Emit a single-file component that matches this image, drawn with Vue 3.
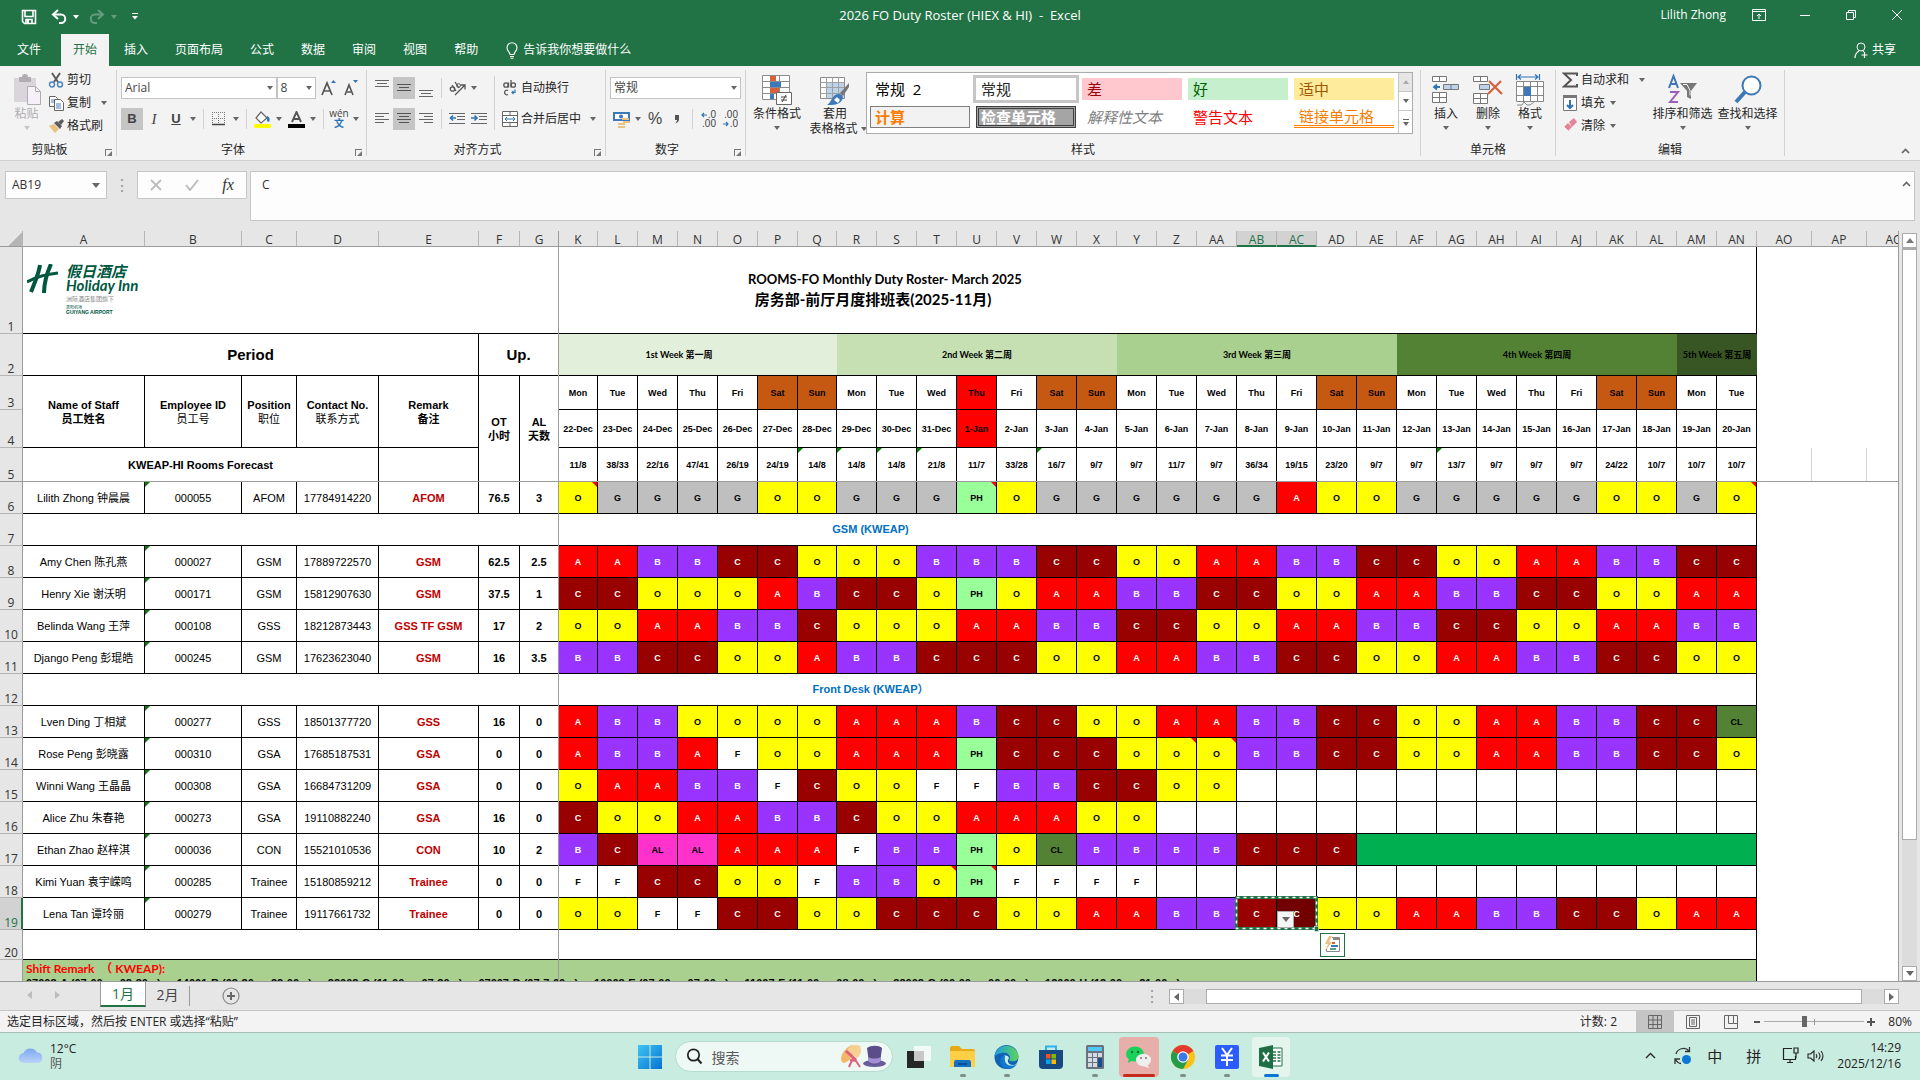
<script setup>
import { ref } from 'vue'

const tabs = ['开始', '插入', '页面布局', '公式', '数据', '审阅', '视图', '帮助']
const fontName = ref('Arial')
const fontSize = ref('8')
const numberFormat = ref('常规')
const cellName = ref('AB19')
const formula = ref('C')
const zoom = ref(80)
const query = ref('')

const staffCols = [
  ['A', 122], ['B', 97], ['C', 55], ['D', 82], ['E', 100], ['F', 41], ['G', 39],
]
const dayNames = ['K', 'L', 'M', 'N', 'O', 'P', 'Q', 'R', 'S', 'T', 'U', 'V', 'W', 'X', 'Y', 'Z',
  'AA', 'AB', 'AC', 'AD', 'AE', 'AF', 'AG', 'AH', 'AI', 'AJ', 'AK', 'AL', 'AM', 'AN']
const dayCols = dayNames.map(n => [n, n === 'K' || n === 'Q' ? 39 : 40])
const restCols = [['AO', 55], ['AP', 55], ['AQ', 55]]
const columns = [...staffCols, ...dayCols, ...restCols]

const weeks = [
  ['1st Week 第一周', 7, 'w1'], ['2nd Week 第二周', 7, 'w2'], ['3rd Week 第三周', 7, 'w3'],
  ['4th Week 第四周', 7, 'w4'], ['5th Week 第五周', 2, 'w5'],
]
const weekdays = ['Mon', 'Tue', 'Wed', 'Thu', 'Fri', 'Sat', 'Sun']
const days = dayNames.map((n, i) => ({
  col: n,
  name: weekdays[i % 7],
  date: i < 10 ? `${22 + i}-Dec` : `${i - 9}-Jan`,
  cls: i === 10 ? 'holiday' : i % 7 > 4 ? 'weekend' : '',
}))
const forecast = ('11/8 38/33 22/16 47/41 26/19 24/19 14/8 14/8 14/8 21/8 11/7 33/28 16/7 9/7 9/7 11/7 9/7 ' +
  '36/34 19/15 23/20 9/7 9/7 13/7 9/7 9/7 9/7 24/22 10/7 10/7 10/7').split(' ')
const flagged = ['Q', 'R', 'S', 'T', 'W', 'AG']

const rows = [
  { n: 6, name: 'Lilith Zhong 钟晨晨', id: '000055', pos: 'AFOM', tel: '17784914220', rem: 'AFOM', ot: '76.5', al: '3', notes: ['K', 'U', 'AN'],
    s: 'O G G G G O O G G G PH O G G G G G G A O O G G G G G O O G O' },
  { n: 7, title: 'GSM (KWEAP)' },
  { n: 8, name: 'Amy Chen 陈孔燕', id: '000027', pos: 'GSM', tel: '17889722570', rem: 'GSM', ot: '62.5', al: '2.5',
    s: 'A A B B C C O O O B B B C C O O A A B B C C O O A A B B C C' },
  { n: 9, name: 'Henry Xie 谢沃明', id: '000171', pos: 'GSM', tel: '15812907630', rem: 'GSM', ot: '37.5', al: '1',
    s: 'C C O O O A B C C O PH O A A B B C C O O A A B B C C O O A A' },
  { n: 10, name: 'Belinda Wang 王萍', id: '000108', pos: 'GSS', tel: '18212873443', rem: 'GSS TF GSM', ot: '17', al: '2',
    s: 'O O A A B B C O O O A A B B C C O O A A B B C C O O A A B B' },
  { n: 11, name: 'Django Peng 彭琨皓', id: '000245', pos: 'GSM', tel: '17623623040', rem: 'GSM', ot: '16', al: '3.5',
    s: 'B B C C O O A B B C C C O O A A B B C C O O A A B B C C O O' },
  { n: 12, title: 'Front Desk (KWEAP）' },
  { n: 13, name: 'Lven Ding 丁相斌', id: '000277', pos: 'GSS', tel: '18501377720', rem: 'GSS', ot: '16', al: '0',
    s: 'A B B O O O O A A A B C C O O A A B B C C O O A A B B C C CL' },
  { n: 14, name: 'Rose Peng 彭晓露', id: '000310', pos: 'GSA', tel: '17685187531', rem: 'GSA', ot: '0', al: '0', notes: ['Z', 'AA'],
    s: 'A B B A F O O A A A PH C C C O O O B B C C O O A A B B C C O' },
  { n: 15, name: 'Winni Wang 王晶晶', id: '000308', pos: 'GSA', tel: '16684731209', rem: 'GSA', ot: '0', al: '0',
    s: 'O A A B B F C O O F F B B C C O O - - - - - - - - - - - - -' },
  { n: 16, name: 'Alice Zhu 朱春艳', id: '000273', pos: 'GSA', tel: '19110882240', rem: 'GSA', ot: '16', al: '0',
    s: 'C O O A A B B C O O A A A O O - - - - - - - - - - - - - - -' },
  { n: 17, name: 'Ethan Zhao 赵梓淇', id: '000036', pos: 'CON', tel: '15521010536', rem: 'CON', ot: '10', al: '2', span: 10,
    s: 'B C AL AL A A A F B B PH O CL B B B B C C C' },
  { n: 18, name: 'Kimi Yuan 袁宇嵘鸣', id: '000285', pos: 'Trainee', tel: '15180859212', rem: 'Trainee', ot: '0', al: '0', notes: ['T', 'U'],
    s: 'F F C C O O F B B O PH F F F F - - - - - - - - - - - - - - -' },
  { n: 19, name: 'Lena Tan 谭玲丽', id: '000279', pos: 'Trainee', tel: '19117661732', rem: 'Trainee', ot: '0', al: '0',
    s: 'O O F F C C O O C C C O O A A B B C C O O A A B B C C O A A' },
].map(r => ({ notes: [], ...r, shifts: r.s ? r.s.split(' ') : [] }))

const shiftNotes = [
  '07003-A (07:00 — 03:30 \u00a0 )', '14001-B (03:30 — 22:00 \u00a0 )', '22003-C (11:00 — 07:30 \u00a0 )',
  '07007-D (07:7:00 \u00a0 )', '10003-E (07:00 — 07:00 \u00a0 )', '11007-F (11:00 — 08:00 \u00a0 )',
  '22003-G (00:00 — 06:00 \u00a0 )', '12000-H (12:00 — 21:00 \u00a0 )',
]
</script>

<template>
  <div class="excel">
    <header class="titlebar">
      <div class="qat">
        <button aria-label="保存"><svg width="16" height="16" viewBox="0 0 16 16"><path d="M1.500 1.500h13v13h-11l-2-2zM4 1.500v6h8v-6M5 14.500v-4h6v4" fill="none" stroke="#fff" stroke-width="1.600" /><path d="M6 11h2v3H6z" fill="#fff" /></svg></button>
        <button class="undo" aria-label="撤消"><svg width="16" height="16" viewBox="0 0 16 16"><path d="M2 5.500h8a4.200 4.200 0 0 1 0 8.500H8" fill="none" stroke="#fff" stroke-width="2" /><path d="M7 1 2 5.500 7 10" fill="none" stroke="#fff" stroke-width="2" /></svg><i class="ar white"></i></button>
        <button class="undo dim" aria-label="恢复"><svg width="16" height="16" viewBox="0 0 16 16"><path d="M14 5.500H6A4.200 4.200 0 0 0 6 14h2M9 1l5 4.500L9 10" fill="none" stroke="#fff" stroke-width="2" /></svg><i class="ar white"></i></button>
        <button aria-label="自定义"><svg width="8" height="8" viewBox="0 0 8 8"><path d="M1 0h6v1H1zM1 3h6L4 6.500z" fill="#fff" /></svg></button>
      </div>
      <h1>2026 FO Duty Roster (HIEX &amp; HI)&nbsp; -&nbsp; Excel</h1>
      <div class="winctl">
        <span>Lilith Zhong</span>
        <button aria-label="功能区显示选项"><svg width="14" height="12" viewBox="0 0 14 12"><path d="M.5.5h13v11H.5zM.5 2.500h13M7 10V5M5 7l2-2 2 2" fill="none" stroke="#fff" /></svg></button>
        <button aria-label="最小化"><svg width="12" height="12" viewBox="0 0 12 12"><path d="M1 6.500h10" stroke="#fff" /></svg></button>
        <button aria-label="还原"><svg width="12" height="12" viewBox="0 0 12 12"><path d="M1.500 3.500h7v7h-7zM3.500 3V1.500h7v7H9" fill="none" stroke="#fff" /></svg></button>
        <button aria-label="关闭"><svg width="12" height="12" viewBox="0 0 12 12"><path d="m1 1 10 10M11 1 1 11" stroke="#fff" /></svg></button>
      </div>
    </header>

    <nav class="tabs">
      <button class="file">文件</button>
      <button v-for="t in tabs" :key="t" class="tab" :class="{ on: t === '开始' }">{{ t }}</button>
      <button class="tell"><svg width="12" height="17" viewBox="0 0 12 17"><path d="M4 12.500C4 10 1 9 1 5.700a5 5 0 0 1 10 0C11 9 8 10 8 12.500zM4 14.500h4M4.500 16.300h3" fill="none" stroke="#fff" stroke-width="1.100" /></svg>告诉我你想要做什么</button>
      <button class="share"><svg width="14" height="17" viewBox="0 0 14 17"><circle cx="7" cy="5" r="4" fill="none" stroke="#fff" /><path d="M1 16c0-3 1.500-5.500 4-7M9 9l1 .8M10.500 10v6M7.500 13h6" fill="none" stroke="#fff" stroke-width="1.200" /></svg>共享</button>
    </nav>

    <section class="ribbon">
      <div class="group clip">
        <div class="body">
          <button class="big off">
            <svg width="30" height="32" viewBox="0 0 30 32"><path d="M2 4h22v24H2z" fill="#dad5da" /><path d="M7 3h3a3 3 0 0 1 6 0h3v5H7z" fill="#b1acb1" /><path d="M15.500 12.500h8l5 5v13h-13z" fill="#f6f0f8" stroke="#b1acb1" /><path d="M23.500 12.500v5h5" fill="none" stroke="#b1acb1" /></svg>
            <span>粘贴</span><i class="ar"></i>
          </button>
          <div class="stack">
            <button><svg width="16" height="16" viewBox="0 0 16 16"><path d="m4 1 6 9M12 1 6 10" stroke="#5c5c5c" stroke-width="2" /><circle cx="4" cy="12.500" r="2.500" fill="none" stroke="#4a82bd" stroke-width="1.400" /><circle cx="12" cy="12.500" r="2.500" fill="none" stroke="#4a82bd" stroke-width="1.400" /></svg>剪切</button>
            <button><svg width="16" height="16" viewBox="0 0 16 16"><path d="M1.500 1.500h6l2 2v8h-8z" fill="#fff" stroke="#666" /><path d="M6.500 4.500h6l3 3v8h-9z" fill="#fff" stroke="#666" /><path d="M3 5h3M3 7h3M8 9h5M8 11h5M8 13h5" stroke="#4a82bd" /></svg>复制<i class="ar far"></i></button>
            <button><svg width="16" height="16" viewBox="0 0 16 16"><path d="m1 8 5-2 5 5-4 4z" fill="#ecc07e" /><path d="m6 5 3-2 5 5-2 3z" fill="#5c5c5c" /><path d="m10 4 4-3 2 2-3 4z" fill="#5c5c5c" /></svg>格式刷</button>
          </div>
        </div>
        <div class="label launch">剪贴板<i class="dlg"></i></div>
      </div>

      <div class="group font">
        <div class="body rows">
          <div class="row">
            <span class="sel wide"><select v-model="fontName" aria-label="字体"><option>Arial</option></select><i class="ar"></i></span>
            <span class="sel size"><select v-model="fontSize" aria-label="字号"><option>8</option></select><i class="ar"></i></span>
            <button class="ib" aria-label="增大字号"><svg width="16" height="18" viewBox="0 0 16 18"><path d="M1 16 6 4l5 12M3 12h6" fill="none" stroke="#555" stroke-width="1.700" /><path d="m10 4 2.500-3L15 4z" fill="#2e75b6" /></svg></button>
            <button class="ib" aria-label="减小字号"><svg width="16" height="18" viewBox="0 0 16 18"><path d="M2 16 6 6l4 10M4 13h4" fill="none" stroke="#555" stroke-width="1.600" /><path d="m10 1 2.500 3L15 1z" fill="#2e75b6" /></svg></button>
          </div>
          <div class="row">
            <button class="ib on"><b>B</b></button>
            <button class="ib"><em>I</em></button>
            <button class="ib"><u>U</u></button><i class="ar slot"></i><hr>
            <button class="ib" aria-label="边框"><svg width="14" height="14" viewBox="0 0 14 14"><path d="M.5 0v13M6.500 0v13M12.500 0v13M0 .5h13M0 6.500h13" stroke="#777" stroke-dasharray="1 1" /><path d="M0 12.500h13" stroke="#444" stroke-width="1.500" /></svg></button><i class="ar slot"></i><hr>
            <button class="ib" aria-label="填充颜色"><svg width="17" height="17" viewBox="0 0 17 17"><path d="m7 1 6 6-6 5-5-5z" fill="#fff" stroke="#666" stroke-width="1.200" /><path d="M13 5c3 1 3 4 2 6l-2-1z" fill="#2e75b6" /><path d="M0 13h17v4H0z" fill="#ff0" /></svg></button><i class="ar slot"></i>
            <button class="ib" aria-label="字体颜色"><svg width="17" height="17" viewBox="0 0 17 17"><path d="M4 11 8.500 1 13 11M5.500 8h6" fill="none" stroke="#555" stroke-width="1.900" /><path d="M0 13h17v4H0z" /></svg></button><i class="ar slot"></i><hr>
            <button class="ib pinyin"><span>wén</span><span class="blue">文</span></button><i class="ar slot"></i>
          </div>
        </div>
        <div class="label launch">字体<i class="dlg"></i></div>
      </div>

      <div class="group align">
        <div class="body">
          <div class="rows">
            <div class="row">
              <button class="ib up" aria-label="顶端对齐"><svg width="14" height="14" viewBox="0 0 14 14"><path d="M0 3.500h14M2 6.500h10M0 9.500h14" stroke="#666" /></svg></button>
              <button class="ib on" aria-label="垂直居中"><svg width="14" height="14" viewBox="0 0 14 14"><path d="M0 3.500h14M2 6.500h10M0 9.500h14" stroke="#555" /></svg></button>
              <button class="ib down" aria-label="底端对齐"><svg width="14" height="14" viewBox="0 0 14 14"><path d="M0 5.500h14M2 8.500h10M0 11.500h14" stroke="#666" /></svg></button><hr>
              <button class="ib" aria-label="方向"><svg width="17" height="15" viewBox="0 0 17 15"><path d="M6 14 16 4M11.500 4H16v4.500" fill="none" stroke="#555" stroke-width="1.300" /><circle cx="3.500" cy="8" r="2.200" fill="none" stroke="#555" stroke-width="1.300" /><path d="m3 4 4 6M6 1l4 6" stroke="#555" stroke-width="1.300" /><circle cx="9.500" cy="4.500" r="1.900" fill="none" stroke="#555" /></svg></button><i class="ar slot"></i>
            </div>
            <div class="row">
              <button class="ib" aria-label="左对齐"><svg width="14" height="14" viewBox="0 0 14 14"><path d="M0 1.500h14M0 4.500h9M0 7.500h14M0 10.500h9" stroke="#666" /></svg></button>
              <button class="ib on" aria-label="居中"><svg width="14" height="14" viewBox="0 0 14 14"><path d="M0 1.500h14M2 4.500h10M0 7.500h14M2 10.500h10" stroke="#555" /></svg></button>
              <button class="ib" aria-label="右对齐"><svg width="14" height="14" viewBox="0 0 14 14"><path d="M0 1.500h14M5 4.500h9M0 7.500h14M5 10.500h9" stroke="#666" /></svg></button><hr>
              <button class="ib" aria-label="减少缩进"><svg width="16" height="14" viewBox="0 0 16 14"><path d="M0 1.500h16M8 4.500h8M8 7.500h8M0 11.500h16" stroke="#666" /><path d="M7 6H2M4 3.500 1.500 6 4 8.500" fill="none" stroke="#2e75b6" stroke-width="1.600" /></svg></button>
              <button class="ib" aria-label="增加缩进"><svg width="16" height="14" viewBox="0 0 16 14"><path d="M0 1.500h16M8 4.500h8M8 7.500h8M0 11.500h16" stroke="#666" /><path d="M0 6h5M3.500 3.500 6 6 3.500 8.500" fill="none" stroke="#2e75b6" stroke-width="1.600" /></svg></button>
            </div>
          </div>
          <hr class="tall">
          <div class="rows">
            <button class="row txt"><svg width="16" height="16" viewBox="0 0 16 16"><circle cx="4" cy="5" r="2.200" fill="none" stroke="#555" stroke-width="1.300" /><path d="M6.500 2.500v5M9 0v7.500" stroke="#555" stroke-width="1.300" /><circle cx="11.300" cy="5" r="2.200" fill="none" stroke="#555" stroke-width="1.300" /><path d="M6 10.500a2.300 2.300 0 1 0 0 4" fill="none" stroke="#555" stroke-width="1.300" /><path d="M13 9.500v3h-3M11.500 11 10 12.500l1.500 1.500" fill="none" stroke="#2e75b6" stroke-width="1.200" /></svg>自动换行</button>
            <button class="row txt"><svg width="16" height="16" viewBox="0 0 16 16"><path d="M.5.5h15v15H.5zM.5 4.500h15M.5 11.500h15M8 .5v4M8 11.500v4" fill="#fff" stroke="#666" /><path d="M3 8h10M5 6 3 8l2 2M11 6l2 2-2 2" fill="none" stroke="#2e75b6" /></svg>合并后居中<i class="ar gap"></i></button>
          </div>
        </div>
        <div class="label launch">对齐方式<i class="dlg"></i></div>
      </div>

      <div class="group num">
        <div class="body rows">
          <div class="row"><span class="sel full"><select v-model="numberFormat" aria-label="数字格式"><option>常规</option></select><i class="ar"></i></span></div>
          <div class="row">
            <button class="ib" aria-label="会计数字格式"><svg width="17" height="17" viewBox="0 0 17 17"><path d="M0 1h17v9H0z" fill="#3d78b8" /><path d="M2 3h13v5H2z" fill="#fff" /><circle cx="8" cy="5.500" r="2" fill="#3d78b8" /><path d="M9 7h7v2H9zM10 10h7v2h-7zM5 12h7v2H5zM5 15h7v2H5z" fill="#ecc07e" /></svg></button><i class="ar slot"></i>
            <button class="ib pct">%</button>
            <button class="ib" aria-label="千位分隔"><svg width="6" height="9" viewBox="0 0 6 9"><path d="M1 0h4v4c0 2-1 4-4 4.500 1-1 2-2 2-3.500H1z" fill="#555" /></svg></button><hr>
            <button class="ib dec"><span><svg width="6" height="6" viewBox="0 0 6 6"><path d="M6 3H1M3 1 1 3l2 2" fill="none" stroke="#2e75b6" stroke-width="1.200" /></svg>.0</span><span>.00</span></button>
            <button class="ib dec"><span>.00</span><span><svg width="6" height="6" viewBox="0 0 6 6"><path d="M0 3h5M3 1l2 2-2 2" fill="none" stroke="#2e75b6" stroke-width="1.200" /></svg>.0</span></button>
          </div>
        </div>
        <div class="label launch">数字<i class="dlg"></i></div>
      </div>

      <div class="group styles">
        <div class="body">
          <button class="big cond">
            <svg width="30" height="32" viewBox="0 0 30 32"><path d="M.5 1.500h27v24H.5zM.5 7.500h27M.5 13.500h27M.5 19.500h27M8.500 1.500v24M17.500 1.500v24" fill="#fff" stroke="#8c8c8c" /><path d="M8 2h6v5H8zM8 14h9v5H8z" fill="#d9603b" /><path d="M8 8h11v5H8zM8 20h4v5H8z" fill="#3d78b8" /><path d="M14.500 18.500h15v12h-15z" fill="#fff" stroke="#666" /><path d="M19 23h6M19 26h6M24 21l-4 7" stroke="#444" /></svg>
            <span>条件格式</span><i class="ar"></i>
          </button>
          <button class="big tfmt">
            <svg width="30" height="32" viewBox="0 0 30 32"><path d="M.5 3.500h24v21H.5z" fill="#fff" stroke="#8c8c8c" /><path d="M6 9h18v15H6z" fill="#bdd3ea" /><path d="M.5 8.500h24M.5 13.500h24M.5 19.500h24M6.500 3.500v21M12.500 3.500v21M18.500 3.500v21" stroke="#a0a0a0" /><path d="m29 9-9 10 3 3 6-9z" fill="#777" /><path d="M19 20c3 0 5 3 3 6-3 5-9 5-15 5 5-3 5-11 12-11z" fill="#3d78b8" /><path d="m14 26 3-3 3 3-2 3z" fill="#fff" /></svg>
            <span>套用</span><span class="l2">表格格式<i class="ar"></i></span>
          </button>
          <div class="gallery">
            <div class="cells">
              <button class="s-normal2">常规&nbsp; 2</button><button class="s-normal">常规</button><button class="s-bad">差</button><button class="s-good">好</button><button class="s-mid">适中</button>
              <button class="s-calc">计算</button><button class="s-check">检查单元格</button><button class="s-note">解释性文本</button><button class="s-warn">警告文本</button><button class="s-link">链接单元格</button>
            </div>
            <div class="gscroll"><button class="dim" aria-label="上一行"><i class="ar flip"></i></button><button aria-label="下一行"><i class="ar"></i></button><button aria-label="其他"><i class="ar more"></i></button></div>
          </div>
        </div>
        <div class="label">样式</div>
      </div>

      <div class="group cellsg">
        <div class="body">
          <button class="big"><svg width="28" height="32" viewBox="0 0 28 32"><path d="M.5 2.500h14v5H.5zM7.500 2.500v5M.5 18.500h14v10H.5zM7.500 18.500v10M.5 23.500h14" fill="#fff" stroke="#777" /><path d="M11.500 10.500h15v5h-15zM19 10.500v5" fill="#bdd3ea" stroke="#777" /><path d="M8 13H3M5 10.500 2 13l3 2.500" fill="none" stroke="#2e75b6" stroke-width="1.800" /></svg><span>插入</span><i class="ar"></i></button>
          <button class="big"><svg width="30" height="32" viewBox="0 0 30 32"><path d="M.5 2.500h14v5H.5zM7.500 2.500v5M.5 19.500h14v10H.5zM7.500 19.500v10M.5 24.500h14" fill="#fff" stroke="#777" /><path d="M6.500 10.500h10v5h-10z" fill="#bdd3ea" stroke="#777" /><path d="m16 7 13 13M28 7 15 20" stroke="#d9603b" stroke-width="2.200" /></svg><span>删除</span><i class="ar"></i></button>
          <button class="big"><svg width="30" height="32" viewBox="0 0 30 32"><path d="M1.500 0v6M24.500 0v6M3 3h20M6 .5 3 3l3 2.500M20 .5 23 3l-3 2.500" fill="none" stroke="#2e75b6" stroke-width="1.200" /><path d="M1.500 7.500h27v20h-27zM1.500 12.500h27M1.500 21.500h27M8.500 7.500v20M15.500 7.500v20M22.500 7.500v20" fill="#fff" stroke="#888" /><path d="M9 13h7v9H9z" fill="#3d78b8" /><path d="M2 31h5l2-3 3 3h3l4-3" fill="none" stroke="#888" /></svg><span>格式</span><i class="ar"></i></button>
        </div>
        <div class="label">单元格</div>
      </div>

      <div class="group edit">
        <div class="body">
          <div class="stack">
            <button><svg width="16" height="16" viewBox="0 0 16 16"><path d="M15 4V1.500H2L9 8l-7 6.500h13V12" fill="none" stroke="#555" stroke-width="2" /></svg>自动求和<i class="ar far"></i></button>
            <button><svg width="16" height="16" viewBox="0 0 16 16"><path d="M1.500.5h13v15h-13z" fill="#fff" stroke="#777" /><path d="M1 0h14v3H1z" fill="#777" /><path d="M8 5v8M5 10l3 3 3-3" fill="none" stroke="#2e75b6" stroke-width="2" /></svg>填充<i class="ar near"></i></button>
            <button><svg width="16" height="16" viewBox="0 0 16 16"><path d="m7 4 5-4 3 4-5 5z" fill="#e58496" /><path d="m6 5 4 4-4 4-4-4z" fill="#e58496" /><path d="m2 9 4 4" stroke="#fff" /></svg>清除<i class="ar near"></i></button>
          </div>
          <button class="big w64"><svg width="30" height="32" viewBox="0 0 30 32"><path d="m1 14 4.500-12L10 14M2.500 10h6" fill="none" stroke="#3d78b8" stroke-width="2" /><path d="M2 18h8L2 28h8" fill="none" stroke="#9a5fb8" stroke-width="2" /><path d="M12 9h17l-6 8v8l-4-2v-6z" fill="#777" /><path d="M15 10.500h4l3 6v5" fill="none" stroke="#f3f3f3" /></svg><span>排序和筛选</span><i class="ar"></i></button>
          <button class="big w64"><svg width="30" height="32" viewBox="0 0 30 32"><circle cx="18.500" cy="11.500" r="9" fill="#fff" stroke="#3d78b8" stroke-width="2" /><path d="m12 18-9 10" stroke="#3d78b8" stroke-width="4" /></svg><span>查找和选择</span><i class="ar"></i></button>
        </div>
        <div class="label">编辑</div>
      </div>
      <button class="collapse" aria-label="折叠功能区"><svg width="9" height="6" viewBox="0 0 9 6"><path d="m1 5 3.500-3.500L8 5" fill="none" stroke="#666" stroke-width="1.700" /></svg></button>
    </section>

    <section class="fbar">
      <span class="namebox"><input v-model="cellName" aria-label="名称框"><i class="ar big4"></i></span>
      <span class="grip">⋮</span>
      <div class="fx">
        <button aria-label="取消"><svg width="12" height="12" viewBox="0 0 12 12"><path d="m1 1 10 10M11 1 1 11" stroke="#bdbdbd" stroke-width="1.800" /></svg></button>
        <button aria-label="输入"><svg width="14" height="12" viewBox="0 0 14 12"><path d="m1 6 4 5 8-10" fill="none" stroke="#bdbdbd" stroke-width="2" /></svg></button>
        <button class="fxi">fx</button>
      </div>
      <div class="finput"><textarea v-model="formula" aria-label="编辑栏"></textarea><svg width="9" height="6" viewBox="0 0 9 6"><path d="m1 5 3.500-3.500L8 5" fill="none" stroke="#666" stroke-width="1.700" /></svg></div>
    </section>

    <main class="sheet">
      <div class="pane">
        <table>
          <colgroup><col class="rowcol"><col v-for="c in columns" :key="c[0]" :style="{ width: c[1] + 'px' }"></colgroup>
          <thead>
            <tr>
              <th class="corner"></th>
              <th v-for="c in columns" :key="c[0]" :class="{ sel2: c[0] === 'AB' || c[0] === 'AC' }">{{ c[0] }}</th>
            </tr>
          </thead>
          <tbody>
            <tr class="r1">
              <th>1</th>
              <td colspan="37" class="title">
                <div class="logo">
                  <svg width="32" height="30" viewBox="0 0 32 30"><path d="M13 1c-1 8-5 17-9 27M24 0c-4 9-7 18-7 29" fill="none" stroke="#00573f" stroke-width="4" /><path d="M0 18c9-5 20-8 31-9" fill="none" stroke="#00573f" stroke-width="3" /></svg>
                  <div><strong class="zh">假日酒店</strong><strong class="en">Holiday Inn</strong><small class="s1">洲际酒店集团旗下</small><small class="s2">贵阳机场</small><small class="s3">GUIYANG AIRPORT</small></div>
                </div>
                <div>ROOMS-FO Monthly Duty Roster- March 2025</div>
                <div class="sub">房务部-前厅月度排班表(2025-11月)</div>
              </td>
              <td colspan="3" class="void"></td>
            </tr>
            <tr class="r2">
              <th>2</th>
              <td colspan="5" class="cap">Period</td><td colspan="2" class="cap">Up.</td>
              <td v-for="w in weeks" :key="w[0]" :colspan="w[1]" class="week" :class="w[2]">{{ w[0] }}</td>
              <td colspan="3" class="void"></td>
            </tr>
            <tr class="r3">
              <th>3</th>
              <td rowspan="2" class="h">Name of Staff<br>员工姓名</td><td rowspan="2" class="h">Employee ID<br><span>员工号</span></td>
              <td rowspan="2" class="h">Position<br><span>职位</span></td><td rowspan="2" class="h">Contact No.<br><span>联系方式</span></td>
              <td rowspan="2" class="h">Remark<br>备注</td><td rowspan="3" class="h">OT<br>小时</td><td rowspan="3" class="h">AL<br>天数</td>
              <td v-for="d in days" :key="d.col" class="day" :class="d.cls">{{ d.name }}</td>
              <td colspan="3" class="void"></td>
            </tr>
            <tr class="r4">
              <th>4</th>
              <td v-for="d in days" :key="d.col" class="date" :class="{ holiday: d.cls === 'holiday' }">{{ d.date }}</td>
              <td colspan="3" class="void"></td>
            </tr>
            <tr class="r5">
              <th>5</th>
              <td colspan="4" class="h">KWEAP-HI Rooms Forecast</td><td></td>
              <td v-for="(f, i) in forecast" :key="i" class="date" :class="{ flag: flagged.includes(dayNames[i]) }">{{ f }}</td>
              <td v-for="c in restCols" :key="c[0]" class="void grid"></td>
            </tr>
            <tr v-for="r in rows" :key="r.n" class="rs" :class="{ cur: r.n === 19 }">
              <th>{{ r.n }}</th>
              <td v-if="r.title" colspan="37" class="section">{{ r.title }}</td>
              <template v-else>
                <td>{{ r.name }}</td><td class="flag">{{ r.id }}</td><td>{{ r.pos }}</td><td>{{ r.tel }}</td>
                <td class="rem">{{ r.rem }}</td><td class="h">{{ r.ot }}</td><td class="h">{{ r.al }}</td>
                <td v-for="(s, i) in r.shifts" :key="i" class="shift" :class="['s' + s, { note: r.notes.includes(dayNames[i]), picked: r.n === 19 && i === 18 }]">
                  {{ s === '-' ? '' : s }}
                  <template v-if="r.n === 19 && i === 17">
                    <svg class="ants" width="84" height="36" viewBox="0 0 84 36"><rect x="1.500" y="1.500" width="80" height="31" fill="none" stroke="#217346" stroke-width="3" /><rect x="1.500" y="1.500" width="80" height="31" fill="none" stroke="#fff" stroke-width="1.500" stroke-dasharray="3 4" /><rect x="79.500" y="30.500" width="4" height="5" fill="#217346" stroke="#fff" stroke-width=".5" /></svg>
                    <button class="drop" aria-label="下拉列表"><i class="ar big4"></i></button>
                    <button class="paste" aria-label="快速分析"><svg width="18" height="18" viewBox="0 0 18 18"><path d="M5 0 1 8h3l-3 7 7-9H5l3-6z" fill="#ecc07e" /><path d="M8 1.500h7.500v14h-13V13" fill="none" stroke="#888" /><path d="M9 2h6v2H9z" fill="#888" /><path d="M8 6h3v2H8z" fill="#d9603b" /><path d="M7 9h7v2H7z" fill="#3d78b8" /><path d="M6 12h6v2H6z" fill="#58a08a" /></svg></button>
                  </template>
                </td>
                <td v-if="r.span" :colspan="r.span" class="leave"></td>
              </template>
              <td colspan="3" class="void"></td>
            </tr>
            <tr class="r20"><th>20</th><td colspan="37"></td><td colspan="3" class="void"></td></tr>
            <tr class="r21">
              <th></th>
              <td colspan="37" class="remark"><strong>Shift Remark &nbsp;（ KWEAP):</strong><div class="notes"><span v-for="s in shiftNotes" :key="s">{{ s }}</span></div></td>
              <td colspan="3" class="void"></td>
            </tr>
          </tbody>
        </table>
        <i class="freeze v"></i><i class="freeze hz"></i>
      </div>
      <div class="vscroll">
        <button aria-label="向上滚动"><i class="ar flip big4"></i></button>
        <span class="vthumb"></span><span class="vtrack"></span>
        <button aria-label="向下滚动"><i class="ar big4"></i></button>
      </div>
    </main>

    <div class="sheettabs">
      <span class="navs"><button aria-label="上一个工作表"><svg width="5" height="8" viewBox="0 0 5 8"><path d="M5 0v8L0 4z" fill="#bcbcbc" /></svg></button><button aria-label="下一个工作表"><svg width="5" height="8" viewBox="0 0 5 8"><path d="M0 0v8l5-4z" fill="#bcbcbc" /></svg></button></span>
      <button class="st on">1月</button><button class="st two">2月</button><i class="bar"></i>
      <button class="add" aria-label="新工作表"><svg width="18" height="18" viewBox="0 0 18 18"><circle cx="9" cy="9" r="8" fill="none" stroke="#888" stroke-width="1.200" /><path d="M9 5v8M5 9h8" stroke="#666" stroke-width="2" /></svg></button>
      <span class="grip2">⋮</span>
      <div class="hscroll">
        <button aria-label="向左滚动"><svg width="5" height="8" viewBox="0 0 5 8"><path d="M5 0v8L0 4z" fill="#666" /></svg></button>
        <span class="ht"></span><span class="hthumb"></span><span class="ht"></span>
        <button aria-label="向右滚动"><svg width="5" height="8" viewBox="0 0 5 8"><path d="M0 0v8l5-4z" fill="#666" /></svg></button>
      </div>
    </div>

    <footer class="status">
      <span>选定目标区域，然后按 ENTER 或选择“粘贴”</span>
      <span class="count">计数: 2</span>
      <button class="view on" aria-label="普通"><svg width="14" height="14" viewBox="0 0 14 14"><path d="M.5.500h13v13H.5zM.5 5h13M.5 9.500h13M5 .5v13M9.500.5v13" fill="none" stroke="#666" /></svg></button>
      <button class="view" aria-label="页面布局"><svg width="14" height="14" viewBox="0 0 14 14"><path d="M.5.500h13v13H.5zM3.500 2.500h7v9h-7zM5 5h4M5 7h4M5 9h4" fill="none" stroke="#666" /></svg></button>
      <button class="view" aria-label="分页预览"><svg width="14" height="14" viewBox="0 0 14 14"><path d="M.5.500h13v13H.5zM4.500.5v8h5v-8M9.500 8.500h4" fill="none" stroke="#666" /></svg></button>
      <button class="zb" aria-label="缩小"><svg width="8" height="8" viewBox="0 0 8 8"><path d="M1 4h6" stroke="#555" stroke-width="2" /></svg></button>
      <input v-model="zoom" type="range" min="0" max="200" aria-label="缩放">
      <button class="zb" aria-label="放大"><svg width="8" height="8" viewBox="0 0 8 8"><path d="M0 4h8M4 0v8" stroke="#555" stroke-width="2" /></svg></button>
      <span class="pc">80%</span>
    </footer>

    <div class="taskbar">
      <div class="weather">
        <svg width="26" height="17" viewBox="0 0 26 17"><defs><linearGradient id="cl" x2="0" y2="1"><stop stop-color="#7fa8f0" /><stop offset="1" stop-color="#b9d3fa" /></linearGradient></defs><path d="M6 16a5 5 0 0 1-.5-10A7.500 7.500 0 0 1 19 5.500 5.300 5.300 0 0 1 20 16z" fill="url(#cl)" /></svg>
        <div>12°C<br><span>阴</span></div>
      </div>
      <div class="apps">
        <button aria-label="开始"><svg width="24" height="24" viewBox="0 0 24 24"><defs><linearGradient id="wn" x2="1" y2="1"><stop stop-color="#3fc4f5" /><stop offset="1" stop-color="#0673d0" /></linearGradient></defs><path d="M0 0h11.500v11.500H0zM12.500 0H24v11.500H12.500zM0 12.500h11.500V24H0zM12.500 12.500H24V24H12.500z" fill="url(#wn)" /></svg></button>
        <label class="search">
          <svg width="17" height="17" viewBox="0 0 17 17"><circle cx="7.500" cy="7" r="5.700" fill="none" stroke="#222" stroke-width="1.700" /><path d="m11.500 11 4 4.500" stroke="#222" stroke-width="2" /></svg>
          <input v-model="query" placeholder="搜索" aria-label="搜索">
          <svg width="46" height="24" viewBox="0 0 46 24"><ellipse cx="8" cy="9" rx="10" ry="5" transform="rotate(-55 8 9)" fill="#f0b868" /><path d="M7 5c3-5 9-6 13-4 2 3 1 9-3 12z" fill="#f7cf90" /><path d="m6 6 10 9" stroke="#e0607a" stroke-width="3" /><path d="m13 13-4 9M14 13l6 9M10 15l6 1" stroke="#e0607a" stroke-width="2" /><ellipse cx="34.500" cy="18.500" rx="11.500" ry="3.500" fill="#6a5d9c" /><path d="M27 3c4-3 12-3 15 0l-2 15c-3 2-9 2-11 0z" fill="#5b4d8a" /><path d="M28 12c4 2 9 2 13 0l-1 5c-3 2-8 2-11 0z" fill="#a48fd6" /></svg>
        </label>
        <button aria-label="任务视图"><svg width="24" height="24" viewBox="0 0 24 24"><path d="M0 6h17v17H0z" fill="#262626" /><path d="M7 1h17v15H7z" fill="#fff" opacity=".75" /></svg></button>
        <button class="run" aria-label="文件资源管理器"><svg width="25" height="24" viewBox="0 0 25 24"><path d="M0 3q0-2 2-2h7l3 3h11q2 0 2 2v14q0 2-2 2H2q-2 0-2-2z" fill="#e8a918" /><path d="M0 7q0-1 1-1h23q1 0 1 1v13q0 2-2 2H2q-2 0-2-2z" fill="#ffcf48" /><path d="M4 17q0-2 2-2h13q2 0 2 2v5H4z" fill="#1470c4" /><path d="M8 19h9" stroke="#0a4d90" stroke-width="2" /></svg></button>
        <button class="run" aria-label="Edge"><svg width="25" height="24" viewBox="0 0 25 24"><defs><linearGradient id="eg" x2="1" y2="0"><stop stop-color="#1b9de2" /><stop offset="1" stop-color="#5fd35a" /></linearGradient></defs><circle cx="12.500" cy="12" r="12" fill="#0f62b4" /><path d="M.5 11C2-1 20-4 24.500 10c1 5-4 7-8 6-2-.5-1-2-.5-3 0-4-4-6-8-5-4 .5-6 2-7.500 3z" fill="url(#eg)" /><path d="M9 12c-3 5 2 11 9 10 2 0 4-2 5-3-4 2-8 1-9-2-.5-2 .5-3 1-4-1-3-5-3-6-1z" fill="#c8ecdf" /><path d="M8 11c-4 5-1 12 6 13 4 0 7-2 9-5-4 3-11 2-12-3-.5-2 0-4 0-5z" fill="#1279d0" /></svg></button>
        <button aria-label="Microsoft Store"><svg width="24" height="24" viewBox="0 0 24 24"><path d="M7 6V1.500h10V6" fill="none" stroke="#2bb2ee" stroke-width="2" /><path d="M0 5h24v15q0 4-4 4H4q-4 0-4-4z" fill="#184a82" /><path d="M7 9h4.500v4.500H7z" fill="#f25022" /><path d="M12.500 9H17v4.500h-4.500z" fill="#7fba00" /><path d="M7 14.500h4.500V19H7z" fill="#00a4ef" /><path d="M12.500 14.500H17V19h-4.500z" fill="#ffb900" /></svg></button>
        <button class="run" aria-label="计算器"><svg width="18" height="24" viewBox="0 0 18 24"><rect width="18" height="24" rx="1.500" fill="#6a7280" /><path d="M2 2h14v4H2z" fill="#4fc8f4" /><path d="M2 8h4v4H2zM7 8h4v4H7zM12 8h4v4h-4zM2 13h4v4H2zM7 13h4v4H7zM2 18h4v4H2zM7 18h4v4H7z" fill="#d5dbe2" /><path d="M12 13h4v9h-4z" fill="#174e8c" /></svg></button>
        <button class="wechat" aria-label="微信"><svg width="25" height="22" viewBox="0 0 25 22"><ellipse cx="9" cy="8" rx="9" ry="7.500" fill="#1ad15c" /><path d="m3 12-1 5 5-3z" fill="#1ad15c" /><circle cx="6" cy="6" r="1.200" fill="#0b6a30" /><circle cx="12" cy="6" r="1.200" fill="#0b6a30" /><ellipse cx="17.500" cy="14" rx="7.500" ry="6.200" fill="#eee" /><path d="m21 18 2 4-6-2z" fill="#eee" /><circle cx="15" cy="12" r="1" fill="#777" /><circle cx="20" cy="12" r="1" fill="#777" /></svg></button>
        <button class="run" aria-label="Chrome"><svg width="24" height="24" viewBox="0 0 24 24"><circle cx="12" cy="12" r="12" fill="#fbc116" /><path d="M12 12 1.600 6A12 12 0 0 1 22.400 6z" fill="#e33b2e" /><path d="M12 12 1.600 6A12 12 0 0 0 12 24l5-9z" fill="#269c48" /><circle cx="12" cy="12" r="5.800" fill="#fff" /><circle cx="12" cy="12" r="4.500" fill="#3b78e8" /></svg></button>
        <button class="run" aria-label="收银"><svg width="24" height="24" viewBox="0 0 24 24"><rect width="24" height="24" rx="2" fill="#2b5cff" /><path d="m7 3 5 7 5-7M6 10.500h12M6 15h12M12 10v11" fill="none" stroke="#fff" stroke-width="2" /></svg></button>
        <button class="xl" aria-label="Excel"><svg width="24" height="24" viewBox="0 0 24 24"><path d="M12 3h11v18H12z" fill="#fff" stroke="#217346" /><path d="M14 7h3M18.500 7h3M14 10h3M18.500 10h3M14 13h3M18.500 13h3M14 16h3M18.500 16h3" stroke="#217346" stroke-width="1.700" /><path d="m0 3 14-3v24L0 21z" fill="#1e7044" /><path d="m4 7.500 6 9M10 7.500l-6 9" stroke="#fff" stroke-width="2" /></svg></button>
      </div>
      <div class="tray">
        <svg width="11" height="7" viewBox="0 0 11 7"><path d="M1 6 5.500 1.500 10 6" fill="none" stroke="#222" stroke-width="1.300" /></svg>
        <svg class="sync" width="18" height="18" viewBox="0 0 18 18"><path d="M2 7c1-5 9-8 13-3M15.500 0v4.500H11M1 17v-5h5M1.500 12.500C3 15 5 16.500 7 16.500" fill="none" stroke="#333" stroke-width="1.300" /><circle cx="12.500" cy="12.500" r="4.500" fill="#0a78d4" /></svg>
        <span class="ime">中</span><span class="ime">拼</span>
        <svg class="mon" width="17" height="17" viewBox="0 0 17 17"><path d="M10 1.500H1.500v11h12V9M5 15.500h6M8 12.500v3M12 1h4v5h-4zM14 6v5" fill="none" stroke="#222" stroke-width="1.200" /></svg>
        <svg width="18" height="14" viewBox="0 0 18 14"><path d="M1 5v4h2.500L7 12V2L3.500 5zM9 5q1.500 2 0 4M11.500 3.500q3 3.500 0 7M14 2q4 5 0 10" fill="none" stroke="#222" stroke-width="1.100" /></svg>
        <div class="clock">14:29<br>2025/12/16</div>
      </div>
    </div>
  </div>
</template>

<style>
body { margin: 0; }
</style>

<style scoped>
.excel { height: 100vh; display: flex; flex-direction: column; overflow: hidden; background: #e6e6e6; font: 12px/16px "Open Sans", "Noto Sans CJK SC", sans-serif; color: #262626; }
.excel *, .excel *::before, .excel *::after { box-sizing: border-box; }
button { border: 0; background: none; padding: 0; margin: 0; font: inherit; color: inherit; display: flex; align-items: center; justify-content: center; white-space: nowrap; }
svg { flex: none; display: block; }
i { font-style: normal; }
.ar { flex: none; width: 0; height: 0; border: 3px solid transparent; border-top: 4px solid #666; border-bottom: 0; }
.ar.white { border-top-color: #fff; }
.ar.big4 { border-width: 5px 4px 0; }
.ar.flip { border-top: 0; border-bottom: 4px solid #777; }
.ar.slot { margin: 0 3px; }
.ar.more { position: relative; }
.ar.more::before { content: ""; position: absolute; left: -3px; top: -7px; width: 6px; height: 1px; background: #666; }

.titlebar { height: 34px; flex: none; background: #217346; color: #fff; display: grid; grid-template-columns: 1fr auto 1fr; align-items: center; padding-bottom: 4px; }
.titlebar h1 { font-size: 13px; line-height: 16px; font-weight: 400; margin: 0; }
.qat { display: flex; gap: 14px; padding: 4px 0 0 21px; align-items: center; }
.undo { gap: 6px; }
.qat .undo.dim { margin-left: -4px; opacity: .3; }
.winctl { display: flex; justify-content: flex-end; align-items: center; }
.winctl span { margin-right: 10px; }
.winctl button { width: 46px; height: 30px; }

.tabs { height: 32px; flex: none; background: #217346; color: #fff; display: flex; gap: 3px; }
.file { padding: 0 17px; }
.tab { padding: 0 12px; }
.tab.on { background: #f3f3f3; color: #217346; }
.tell { margin-left: 13px; gap: 5px; }
.share { margin-left: auto; padding-right: 24px; gap: 4px; }

.ribbon { height: 95px; flex: none; background: #f3f3f3; border-bottom: 1px solid #d0d0d0; display: flex; padding: 4px 0; }
.group { display: flex; flex-direction: column; border-right: 1px solid #d2d2d2; flex: none; }
.body { height: 74px; display: flex; padding: 0 4px; }
.label { height: 12px; line-height: 12px; text-align: center; position: relative; }
.launch { padding-right: 17px; }
.dlg { position: absolute; right: 4px; bottom: 0; width: 7px; height: 7px; border-left: 1px solid #777; border-top: 1px solid #777; }
.dlg::after { content: ""; position: absolute; right: 0; bottom: 0; border-bottom: 5px solid #777; border-left: 5px solid transparent; }
.clip { width: 117px; }
.clip .body { padding: 0 0 0 5px; }
.font { width: 250px; }
.align { width: 239px; }
.num { width: 140px; }
.styles { width: 675px; }
.cellsg { width: 135px; }
.edit { width: 229px; }
.big { flex: none; flex-direction: column; justify-content: flex-start; padding-top: 4px; width: 42px; }
.big > span { line-height: 15px; }
.big > .ar { margin-top: 5px; }
.off { width: 43px; color: #b1acb1; }
.off .ar { border-top-color: #c5c5c5; }
.cond { width: 54px; }
.tfmt { width: 62px; }
.l2 { display: flex; align-items: center; gap: 3px; padding-left: 6px; }
.w64 { width: 65px; }
.stack { display: flex; flex-direction: column; gap: 3px; flex: none; }
.stack button { height: 20px; width: 66px; justify-content: flex-start; gap: 3px; }
.stack .far { margin-left: 7px; }
.stack .near { margin-left: 2px; }
.edit .stack { width: 90px; padding-left: 2px; }
.edit .stack button { width: 88px; }
.rows { display: flex; flex-direction: column; gap: 9px; padding-top: 7px; }
.row { display: flex; height: 22px; align-items: center; }
.ib { width: 22px; height: 22px; font: 15px/22px "Liberation Serif", serif; color: #444; flex: none; }
.ib b { font: bold 13px/22px "Liberation Sans", sans-serif; }
.ib.on { background: #c5c5c5; }
.ib.up { align-items: flex-start; }
.ib.down { align-items: flex-end; }
.ib u { font: bold 13px/18px "Liberation Sans", sans-serif; }
hr { width: 1px; height: 20px; border: 0; background: #d2d2d2; margin: 0 4px; flex: none; }
hr.tall { height: 54px; margin-top: 6px; }
.pinyin { flex-direction: column; }
.pinyin span { font: 10px/11px "Open Sans", "Noto Sans CJK SC", sans-serif; height: 10px; }
.pinyin .blue { color: #2e75b6; font-weight: 700; height: 12px; }
.sel { position: relative; height: 22px; border: 1px solid #c3c3c3; background: #fff; display: flex; align-items: center; }
.sel select { appearance: none; border: 0; background: none; width: 100%; height: 20px; padding: 0 3px; font: inherit; color: #444; outline: 0; }
.sel .ar { position: absolute; right: 3px; }
.wide { width: 158px; }
.size { width: 40px; margin-right: 2px; }
.full { width: 131px; }
.txt { gap: 3px; padding-left: 3px; justify-content: flex-start; }
.txt .gap { margin-left: 6px; }
.ib.pct { font: 16px/22px "Liberation Sans", sans-serif; }
.dec { flex-direction: column; align-items: flex-end; padding-right: 3px; }
.dec span { display: flex; align-items: center; gap: 1px; font: 10px/9px "Liberation Sans", sans-serif; }
.gallery { width: 547px; height: 62px; margin-top: 2px; border: 1px solid #ababab; background: #fff; display: flex; }
.cells { display: grid; grid-template-columns: repeat(5, 100px); grid-auto-rows: 22px; gap: 6px; padding: 5px 4px 0 3px; }
.cells button { justify-content: flex-start; padding-left: 5px; font-size: 15px; line-height: 20px; }
.s-normal2 { color: #000; }
.s-normal { outline: 3px solid #c6c6c6; }
.s-bad { background: #ffc7ce; color: #9c0006; }
.s-good { background: #c6efce; color: #006100; }
.s-mid { background: #ffeb9c; color: #9c5700; }
.cells .s-calc { border: 1px solid #7f7f7f; background: #f2f2f2; color: #fa7d00; font-weight: 700; padding-left: 4px; }
.cells .s-check { border: 3px double #3f3f3f; background: #a5a5a5; color: #fff; font-weight: 700; padding-left: 2px; }
.s-note { color: #7f7f7f; font-style: italic; }
.s-warn { color: #f00; }
.cells .s-link { color: #fa7d00; border-bottom: 3px double #ff8001; }
.gscroll { width: 15px; display: flex; flex-direction: column; border-left: 1px solid #c6c6c6; }
.gscroll button { flex: 1; border-bottom: 1px solid #c6c6c6; }
.gscroll button:last-child { border: 0; padding-top: 4px; }
.gscroll .dim { background: #e6e6e6; }
.gscroll .dim .ar { border-bottom-color: #aaa; }
.collapse { margin: auto 10px 1px auto; height: 8px; }

.fbar { height: 70px; flex: none; display: flex; padding: 10px 5px; align-items: flex-start; }
.namebox { width: 102px; height: 28px; border: 1px solid #c6c6c6; background: #fdfdfd; display: flex; align-items: center; padding-right: 6px; }
.namebox input { border: 0; background: none; width: 100%; min-width: 0; padding: 0 6px; font: inherit; color: #333; outline: 0; }
.grip { width: 30px; text-align: center; line-height: 28px; font-size: 16px; color: #999; }
.fx { width: 110px; height: 28px; border: 1px solid #c6c6c6; background: #fdfdfd; display: flex; }
.fx button { flex: 1; }
.fx .fxi { font: italic 16px/26px "Liberation Serif", serif; color: #333; }
.finput { flex: 1; height: 50px; margin-left: 3px; border: 1px solid #c6c6c6; background: #fdfdfd; display: flex; padding: 5px 3px 0 11px; }
.finput textarea { flex: 1; border: 0; background: none; resize: none; padding: 0; font: inherit; color: #333; outline: 0; height: 36px; }
.finput svg { margin-top: 4px; }

.sheet { flex: 1; min-height: 0; display: flex; overflow: hidden; border-bottom: 1px solid #9b9b9b; }
.pane { flex: 1; min-width: 0; overflow: hidden; position: relative; border-right: 1px solid #9b9b9b; background: #fff; }
table { table-layout: fixed; width: 1px; border-collapse: separate; border-spacing: 0; font: 11px/14px "Liberation Sans", "Noto Sans CJK SC", sans-serif; color: #000; }
.rowcol { width: 23px; }
th { background: #e6e6e6; font: 12px/12px "Open Sans", sans-serif; color: #333; padding: 0; text-align: center; vertical-align: bottom; }
thead th { height: 16px; border-right: 1px solid #b5b5b5; border-bottom: 1px solid #9b9b9b; }
thead .corner { background: linear-gradient(135deg, #e6e6e6 62%, #b5b5b5 63%); }
thead .sel2 { background: #d2d2d2; color: #217346; border-bottom-color: #217346; box-shadow: inset 0 -1px #217346; }
tbody th { border-right: 1px solid #9b9b9b; border-bottom: 1px solid #b5b5b5; }
.cur th { background: #d2d2d2; color: #217346; border-right-color: #217346; box-shadow: inset -1px 0 #217346; }
td { padding: 0; border-right: 1px solid #000; border-bottom: 1px solid #000; text-align: center; vertical-align: middle; white-space: nowrap; position: relative; }
.void { border: 0; }
.void.grid { border-right: 1px solid #d4d4d4; }
.r1 { height: 87px; }
.r2 { height: 42px; }
.r3 { height: 34px; }
.r4 { height: 38px; }
.r5 { height: 34px; }
.rs { height: 32px; }
.r20 { height: 30px; }
.r21 { height: 60px; }
.title { font: bold 13px/20px Lato, "Noto Sans CJK SC", sans-serif; padding: 0 9px 2px 0; }
.title .sub { font-size: 15px; padding-right: 24px; }
.logo { position: absolute; left: 4px; top: 17px; display: flex; gap: 7px; color: #00573f; text-align: left; }
.logo strong, .logo small { display: block; }
.logo .zh { font: italic bold 15px/14px "Noto Sans CJK SC", sans-serif; }
.logo .en { font: italic bold 15px/15px Lato, sans-serif; }
.logo .s1 { font: 6px/8px "Noto Sans CJK SC", sans-serif; color: #888; margin-top: 2px; }
.logo .s2 { font: 4px/5px "Noto Sans CJK SC", sans-serif; margin-top: 2px; }
.logo .s3 { font: bold 5px/5px "Liberation Sans", sans-serif; }
.cap { font-size: 15px; font-weight: 700; }
.h { font-weight: 700; }
.h span { font-weight: 400; }
td.week { font: bold 9px/14px Lato, "Noto Sans CJK SC", sans-serif; border-right: 0; }
td.w1 { background: #e2efda; padding-right: 38px; }
.w2 { background: #c6e0b4; }
.w3 { background: #a9d08e; }
.w4 { background: #548235; }
.w5 { background: #375623; }
.day, .date { font-size: 9px; font-weight: 700; }
.weekend { background: #c65911; }
.holiday { background: #f00; }
.section { color: #0070c0; font-weight: 700; padding: 0 38px 2px 0; }
.rem { color: #c00000; font-weight: 700; }
.flag::before { content: ""; position: absolute; left: 0; top: 0; border-top: 5px solid #008000; border-right: 5px solid transparent; }
.note::after { content: ""; position: absolute; right: 0; top: 0; border-top: 5px solid #f00; border-left: 5px solid transparent; }
.shift { font-size: 9px; font-weight: 700; }
.sA { background: #f00; color: #fff; }
.sB { background: #93f; color: #fff; }
.sC { background: #900; color: #fff; }
.sO { background: #ff0; }
.sG { background: #bfbfbf; }
.sPH { background: #9f9; }
.sAL { background: #f3c; }
.sCL { background: #548235; }
.picked { background: #730000; }
.leave { background: #00b050; }
.ants { position: absolute; left: -2px; top: -2px; z-index: 2; }
.drop { position: absolute; left: 40px; top: 13px; width: 17px; height: 17px; background: #f5f5f5; border: 1px solid #ababab; z-index: 3; }
.paste { position: absolute; left: 83px; top: 35px; width: 25px; height: 24px; background: #fff; border: 1px solid #217346; z-index: 3; }
td.remark { background: #a9d08e; text-align: left; vertical-align: top; padding: 0 3px; }
.remark strong { display: block; color: #f00; font: bold 12px/17px Lato, "Noto Sans CJK SC", sans-serif; }
.notes { display: flex; gap: 16px; font: bold 11px/13px "Liberation Sans", sans-serif; }
.freeze { position: absolute; background: #9b9b9b; z-index: 1; }
.freeze.v { left: 558px; top: 0; bottom: 0; width: 1px; }
.freeze.hz { left: 0; right: 0; top: 250px; height: 1px; }

.vscroll { width: 21px; flex: none; padding: 2px 3px 0; display: flex; flex-direction: column; background: #e6e6e6; }
.vscroll button { height: 15px; background: #fff; border: 1px solid #ababab; }
.vscroll .flip { border-top: 0; border-bottom-width: 5px; }
.vthumb { flex: 592; background: #fff; border: 1px solid #ababab; border-top-width: 2px; }
.vtrack { flex: 127; background: #dcdcdc; }

.sheettabs { height: 28px; flex: none; display: flex; align-items: flex-start; }
.navs { width: 100px; height: 26px; display: flex; gap: 23px; padding-left: 27px; align-items: center; }
.st { height: 25px; width: 46px; font-size: 14px; line-height: 20px; color: #444; }
.st.on { background: #fff; color: #217346; border: 1px solid #9b9b9b; border-top: 0; border-bottom: 2px solid #217346; }
.st.two { width: 43px; }
.bar { width: 1px; height: 20px; margin-top: 4px; background: #999; }
.add { margin: 5px 0 0 32px; }
.grip2 { margin-left: auto; line-height: 28px; font-size: 16px; color: #999; }
.hscroll { width: 38%; height: 15px; margin: 7px 21px 0 9px; display: flex; }
.hscroll button { width: 15px; background: #fff; border: 1px solid #ababab; }
.hthumb { flex: 1; background: #fff; border: 1px solid #ababab; }
.ht { background: #dcdcdc; width: 22px; }

.status { height: 22px; flex: none; background: #f3f3f3; border-top: 1px solid #c6c6c6; display: flex; align-items: center; padding: 0 8px 0 7px; }
.count { margin-left: auto; margin-right: 19px; }
.view { width: 38px; height: 21px; }
.view.on { background: #c5c5c5; }
.zb { width: 14px; height: 20px; }
.status input { appearance: none; width: 100px; height: 14px; margin: 0; background: linear-gradient(#999, #999) 50% 50% / 1px 6px no-repeat, linear-gradient(#aaa, #aaa) 0 50% / 100% 1px no-repeat; }
.status input::-webkit-slider-thumb { appearance: none; width: 5px; height: 11px; background: #666; }
.pc { margin-left: 8px; width: 26px; text-align: right; }

.taskbar { height: 48px; flex: none; background: #c8ecdf; border-top: 1px solid #a5bdb2; display: grid; grid-template-columns: 1fr auto 1fr; align-items: center; color: #222; }
.weather { display: flex; align-items: center; gap: 6px; padding: 0 0 2px 18px; line-height: 15px; }
.weather span { color: #555; }
.apps { display: flex; align-items: center; }
.apps button { width: 44px; height: 40px; position: relative; }
.search { width: 218px; height: 31px; margin: 0 4px 0 3px; border-radius: 16px; background: #eef8f4; border: 1px solid #b5dccd; display: flex; align-items: center; padding: 0 6px 0 10px; gap: 9px; }
.search input { flex: 1; min-width: 0; border: 0; background: none; padding: 0; font: 14px/20px "Noto Sans CJK SC", sans-serif; outline: 0; }
.search input::placeholder { color: #5a5a5a; opacity: 1; }
.run::after { content: ""; position: absolute; bottom: 0; left: 19px; width: 6px; height: 3px; border-radius: 2px; background: #7d8f88; }
.apps .wechat { width: 40px; margin: 0 2px; background: #e8aeaa; border-radius: 4px; }
.wechat::after { content: ""; position: absolute; bottom: 0; left: 4px; width: 32px; height: 3px; border-radius: 2px; background: #c42b1c; }
.apps .xl { width: 38px; margin: 0 3px; background: #e4f5ee; border-radius: 4px; }
.xl::after { content: ""; position: absolute; bottom: 0; left: 12px; width: 15px; height: 3px; border-radius: 2px; background: #0a78d4; }
.tray { display: flex; justify-content: flex-end; align-items: center; padding: 0 19px 2px 0; }
.sync { margin-left: 18px; }
.ime { margin-left: 15px; font: 15px/20px "Noto Sans CJK SC", sans-serif; width: 15px; }
.ime + .ime { margin-left: 24px; }
.mon { margin-left: 21px; margin-right: 8px; }
.clock { margin-left: 12px; text-align: right; line-height: 16px; }
</style>
